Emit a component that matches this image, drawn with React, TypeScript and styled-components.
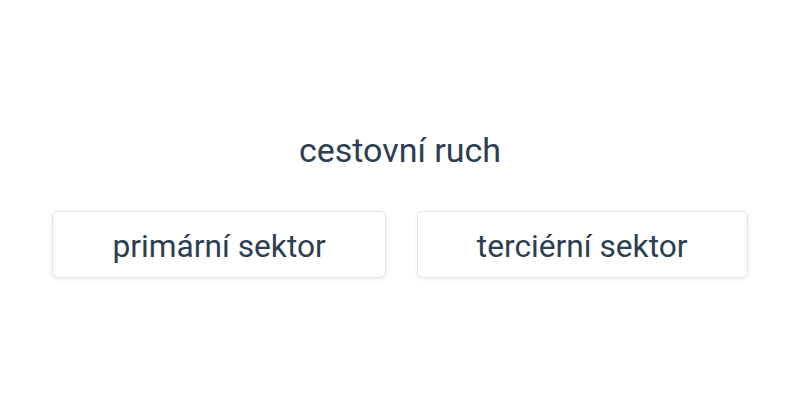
import React from "react";
import styled, { createGlobalStyle } from "styled-components";

const Global = createGlobalStyle`
  html, body { margin: 0; padding: 0; background: #fff; }
  body { font-family: Roboto, "Liberation Sans", sans-serif; color: #2c3e50; }
`;

const Page = styled.div`
  height: 400px;
  box-sizing: border-box;
  padding-top: 130px;
  display: flex;
  flex-direction: column;
  align-items: center;
`;

const Prompt = styled.div`
  font-size: 34px;
  line-height: 40px;
  margin-bottom: 41px;
`;

const Options = styled.div`
  display: flex;
  gap: 31px;
`;

const Option = styled.button`
  box-sizing: border-box;
  font-family: Roboto, "Liberation Sans", sans-serif;
  font-size: 31.7px;
  line-height: 37px;
  color: #2c3e50;
  background: #fff;
  border: 1px solid #e4e4e4;
  border-radius: 6px;
  box-shadow: 0 1px 4px rgba(0, 0, 0, 0.08);
  padding: 3px 59px 0;
  height: 67px;
  cursor: pointer;
`;

export default function App() {
  return (
    <>
      <Global />
      <Page>
        <Prompt>cestovní ruch</Prompt>
        <Options>
          <Option>primární sektor</Option>
          <Option>terciérní sektor</Option>
        </Options>
      </Page>
    </>
  );
}
